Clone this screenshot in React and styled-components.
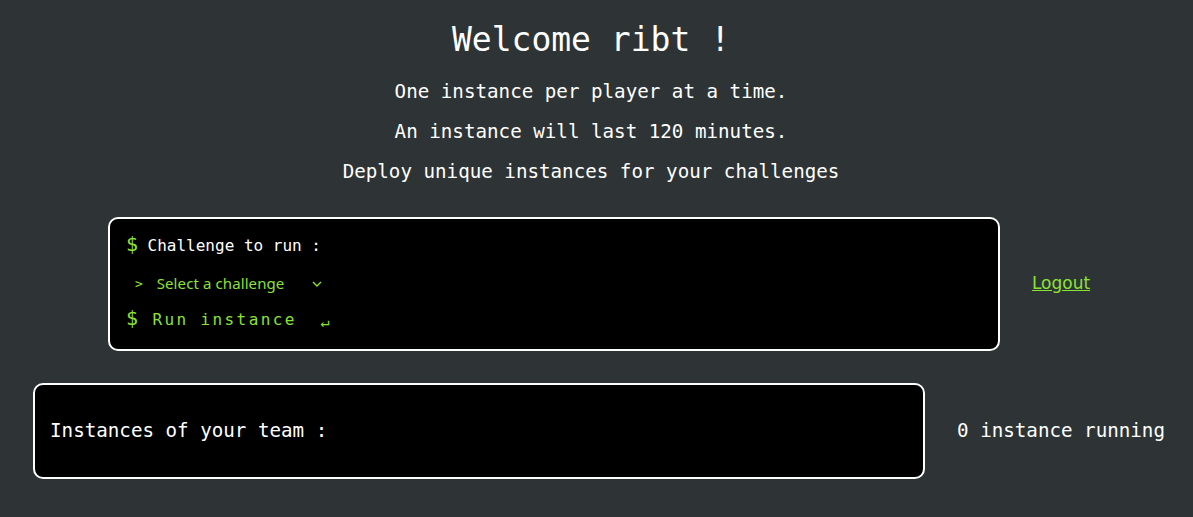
import React from 'react'
import styled, { createGlobalStyle } from 'styled-components'

const GlobalStyle = createGlobalStyle`
  html, body {
    margin: 0;
    padding: 0;
    background: #2e3436;
  }
  body {
    font-family: "DejaVu Sans Mono", monospace;
    color: #ffffff;
  }
`

const App = () => {
  return (
    <>
      <GlobalStyle />
      <Page>
        <Header>
          <Title>Welcome ribt !</Title>
          <Info>One instance per player at a time.</Info>
          <Info>An instance will last 120 minutes.</Info>
          <Info>Deploy unique instances for your challenges</Info>
        </Header>

        <Row>
          <Terminal>
            <Prompt>
              <Dollar>$</Dollar> Challenge to run :
            </Prompt>
            <Select>
              <Caret>&gt;</Caret>
              <SelectLabel>Select a challenge</SelectLabel>
              <svg width="10" height="6" viewBox="0 0 10 6">
                <path d="M1 1l4 4 4-4" fill="none" stroke="#8ae234" strokeWidth="1.4" />
              </svg>
            </Select>
            <RunButton>
              <Dollar>$</Dollar> Run instance&nbsp;&nbsp;<Enter>↵</Enter>
            </RunButton>
          </Terminal>
          <Logout href="#">Logout</Logout>
        </Row>

        <Row $top={32}>
          <Terminal $pad="35px 15px 34px">
            <TeamLabel>Instances of your team :</TeamLabel>
          </Terminal>
          <Count>0 instance running</Count>
        </Row>
      </Page>
    </>
  )
}

export default App

const Page = styled.div`
  display: flex;
  flex-direction: column;
  align-items: center;
`

const Header = styled.header`
  display: flex;
  flex-direction: column;
  align-items: center;
  margin: 0 11px 34px 0;
`

const Title = styled.h1`
  font-size: 33px;
  font-weight: normal;
  margin: 20px 0 21px;
  line-height: 40px;
`

const Info = styled.p`
  font-size: 19.2px;
  margin: 0 0 17.5px;
  line-height: 22.4px;

  &:last-child {
    margin-bottom: 0;
  }
`

const Row = styled.div`
  display: flex;
  align-items: center;
  gap: 32px;
  padding-left: 5px;
  margin-top: ${p => p.$top || 0}px;
`

const Terminal = styled.div`
  width: 892px;
  box-sizing: border-box;
  background: #000;
  border: 2px solid #ffffff;
  border-radius: 10px;
  padding: ${p => p.$pad || '17px 16px 19px'};
  display: flex;
  flex-direction: column;
`

const Prompt = styled.div`
  font-size: 16px;
  line-height: 20px;
  color: #ffffff;
`

const Dollar = styled.span`
  color: #8ae234;
  font-size: 20px;
  line-height: 0;
`

const Select = styled.div`
  display: flex;
  align-items: center;
  height: 24px;
  margin-top: 15px;
  padding-left: 9px;
  color: #8ae234;
  font-family: "Noto Sans", sans-serif;
  font-size: 15px;

  svg {
    margin-left: 28px;
    margin-top: 1px;
  }
`

const Caret = styled.span`
  font-family: "DejaVu Sans Mono", monospace;
  font-size: 13px;
  margin-right: 14px;
`

const SelectLabel = styled.span`
  letter-spacing: 0.1px;
`

const RunButton = styled.div`
  margin-top: 15px;
  font-size: 16px;
  line-height: 20px;
  letter-spacing: 2.4px;
  color: #8ae234;
`

const Enter = styled.span`
  font-size: 15px;
  line-height: 0;
  position: relative;
  top: 2px;
`

const Logout = styled.a`
  font-family: "DejaVu Sans", sans-serif;
  font-size: 17px;
  color: #8ae234;
  text-decoration: underline;
  margin-bottom: 3px;
`

const TeamLabel = styled.div`
  font-size: 19.2px;
  line-height: 22.4px;
`

const Count = styled.div`
  font-size: 19.2px;
  line-height: 22.4px;
  white-space: nowrap;
`
